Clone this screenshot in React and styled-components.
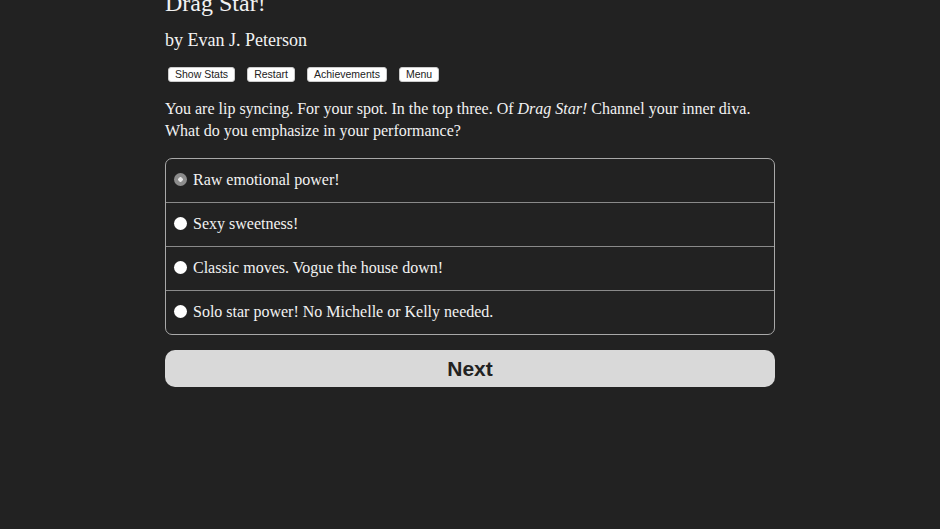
import React, { useState } from 'react';
import styled, { createGlobalStyle } from 'styled-components';

const GlobalStyle = createGlobalStyle`
  html, body {
    margin: 0;
    padding: 0;
    background: #222222;
  }
  body {
    font-family: 'Liberation Serif', 'Times New Roman', serif;
    color: #f2f2f2;
  }
`;

const choices = [
  'Raw emotional power!',
  'Sexy sweetness!',
  'Classic moves. Vogue the house down!',
  'Solo star power! No Michelle or Kelly needed.',
];

const App = () => {
  const [picked, setPicked] = useState(0);

  return (
    <>
      <GlobalStyle />
      <Page>
        <Title>Drag Star!</Title>
        <Author>by Evan J. Peterson</Author>
        <Toolbar>
          <SmallButton>Show Stats</SmallButton>
          <SmallButton>Restart</SmallButton>
          <SmallButton>Achievements</SmallButton>
          <SmallButton>Menu</SmallButton>
        </Toolbar>
        <Text>
          You are lip syncing. For your spot. In the top three. Of <em>Drag Star!</em> Channel
          your inner diva. What do you emphasize in your performance?
        </Text>
        <ChoiceList>
          {choices.map((c, i) => (
            <ChoiceRow key={c} onClick={() => setPicked(i)}>
              <Radio $selected={picked === i} />
              <span>{c}</span>
            </ChoiceRow>
          ))}
        </ChoiceList>
        <NextButton>Next</NextButton>
      </Page>
    </>
  );
};

export default App;

const Page = styled.div`
  width: 610px;
  margin: -12px auto 0;
  display: flex;
  flex-direction: column;
`;

const Title = styled.h1`
  margin: 0;
  font-weight: normal;
  font-size: 24px;
  line-height: 30px;
`;

const Author = styled.h2`
  margin: 10px 0 0;
  font-weight: normal;
  font-size: 18px;
  line-height: 24px;
`;

const Toolbar = styled.div`
  display: flex;
  gap: 12px;
  margin: 15px 0 0 3px;
`;

const SmallButton = styled.button`
  font-family: 'Liberation Sans', Arial, sans-serif;
  font-size: 10.5px;
  line-height: 13px;
  color: #222;
  background: #ffffff;
  border: 1px solid #ccc;
  border-radius: 3px;
  padding: 0 6px;
  height: 15px;
`;

const Text = styled.p`
  margin: 16px 0 0;
  font-size: 16px;
  line-height: 22px;
`;

const ChoiceList = styled.div`
  margin-top: 16px;
  border: 1px solid #a8a8a8;
  border-radius: 7px;
  display: flex;
  flex-direction: column;
  overflow: hidden;
`;

const ChoiceRow = styled.label`
  display: flex;
  align-items: center;
  gap: 6px;
  height: 43px;
  padding: 0 0 2px 8px;
  box-sizing: border-box;
  height: 44px;
  font-size: 16px;
  border-top: 1px solid #8a8a8a;
  cursor: pointer;

  &:first-child {
    border-top: none;
    height: 43px;
  }
`;

const Radio = styled.span`
  width: 13px;
  height: 13px;
  border-radius: 50%;
  flex: none;
  box-sizing: border-box;
  background: ${(p) => (p.$selected ? 'radial-gradient(circle, #e6e6e6 0 2px, #8c8c8c 2.5px)' : '#ffffff')};
`;

const NextButton = styled.button`
  margin-top: 15px;
  height: 37px;
  border: none;
  border-radius: 10px;
  background: #d9d9d9;
  color: #222;
  font-family: 'Liberation Sans', Arial, sans-serif;
  font-weight: bold;
  font-size: 21px;
`;
